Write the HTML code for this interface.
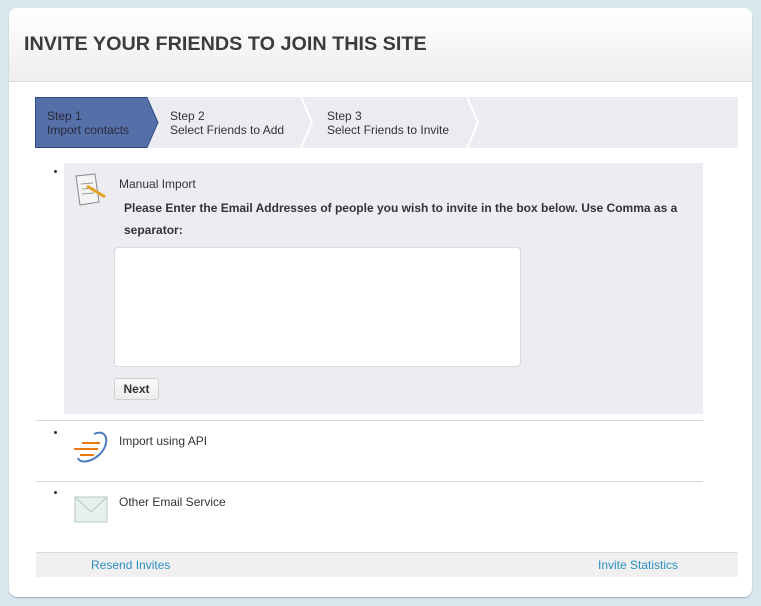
<!DOCTYPE html>
<html><head><style>
body{margin:0;background:#d9e6ee;font-family:"Liberation Sans",sans-serif;width:761px;height:606px;overflow:hidden;position:relative}
.card{position:absolute;left:9px;top:8px;width:743px;height:589px;background:#fff;border-radius:8px;overflow:hidden;box-shadow:0 1px 1px #9ab}
.hd{height:73px;background:linear-gradient(#fff,#eeeeee);border-bottom:1px solid #dcdcdc}
.hd h1{margin:0;position:absolute;left:15px;top:25px;font-size:19.8px;font-weight:bold;color:#3c3c3c}
.abs{position:absolute}
.t{font-size:12px;color:#333;line-height:14px}
</style></head><body>
<div class="card"><div class="hd"><h1>INVITE YOUR FRIENDS TO JOIN THIS SITE</h1></div></div>
<svg class="abs" style="left:35px;top:97px" width="703" height="51">
<rect x="0" y="0" width="703" height="51" fill="#ebecf1"/>
<polygon points="0.5,0.5 112,0.5 123,25.5 112,50.5 0.5,50.5" fill="#5570a8" stroke="#2f4a85"/>
<polyline points="266,0 277,25.5 266,51" fill="none" stroke="#fff" stroke-width="2"/>
<polyline points="432,0 443,25.5 432,51" fill="none" stroke="#fff" stroke-width="2"/>
</svg>
<div class="abs t" style="left:47px;top:109px;color:#2a2a3a">Step 1<br>Import contacts</div>
<div class="abs t" style="left:170px;top:109px">Step 2<br>Select Friends to Add</div>
<div class="abs t" style="left:327px;top:109px">Step 3<br>Select Friends to Invite</div>
<div class="abs" style="left:64px;top:163px;width:639px;height:251px;background:#ecedf2"></div>
<div class="abs" style="left:54px;top:170px;width:3px;height:3px;background:#333;border-radius:2px"></div>
<div class="abs" style="left:54px;top:431px;width:3px;height:3px;background:#333;border-radius:2px"></div>
<div class="abs" style="left:54px;top:491px;width:3px;height:3px;background:#333;border-radius:2px"></div>
<svg class="abs" style="left:73px;top:172px" width="36" height="36">
<polygon points="3,4 22,2 26,30 7,33" fill="#f4f4f4" stroke="#888"/>
<line x1="8" y1="12" x2="20" y2="11" stroke="#999"/><line x1="9" y1="17" x2="21" y2="16" stroke="#999"/><line x1="9" y1="22" x2="21" y2="21" stroke="#999"/>
<line x1="14" y1="14" x2="32" y2="25" stroke="#e8a020" stroke-width="3"/>
</svg>
<div class="abs t" style="left:119px;top:177px">Manual Import</div>
<div class="abs" style="left:124px;top:197px;width:570px;font-size:12px;font-weight:bold;color:#333;line-height:22px">Please Enter the Email Addresses of people you wish to invite in the box below. Use Comma as a separator:</div>
<div class="abs" style="left:114px;top:247px;width:405px;height:118px;background:#fff;border:1px solid #d8dbe2;border-radius:4px"></div>
<div class="abs" style="left:114px;top:378px;width:43px;height:20px;background:linear-gradient(#fafafa,#ececec);border:1px solid #d0d0d0;border-radius:3px;font-size:12px;font-weight:bold;color:#333;text-align:center;line-height:20px">Next</div>
<div class="abs" style="left:36px;top:420px;width:667px;height:1px;background:#d4d8e2"></div>
<svg class="abs" style="left:72px;top:430px" width="40" height="36">
<path d="M22 4 C36 -2 38 14 28 24 C20 32 8 34 6 28" fill="none" stroke="#4a7cc0" stroke-width="2"/>
<line x1="10" y1="13" x2="28" y2="13" stroke="#e87810" stroke-width="2"/><line x1="2" y1="19" x2="26" y2="19" stroke="#e87810" stroke-width="2"/><line x1="8" y1="25" x2="22" y2="25" stroke="#e87810" stroke-width="2"/>
</svg>
<div class="abs t" style="left:119px;top:434px">Import using API</div>
<div class="abs" style="left:36px;top:481px;width:667px;height:1px;background:#d8d8d8"></div>
<svg class="abs" style="left:74px;top:496px" width="36" height="28">
<rect x="1" y="1" width="32" height="25" fill="#e6f0ee" stroke="#b8c8c6"/>
<polyline points="1,1 17,16 33,1" fill="none" stroke="#b8c8c6"/>
</svg>
<div class="abs t" style="left:119px;top:495px">Other Email Service</div>
<div class="abs" style="left:36px;top:552px;width:702px;height:24px;background:#f0f0f0;border-top:1px solid #dcdcdc"></div>
<div class="abs" style="left:91px;top:558px;font-size:12px;color:#2a8fc0">Resend Invites</div>
<div class="abs" style="left:598px;top:558px;font-size:12px;color:#2a8fc0">Invite Statistics</div>
</body></html>
